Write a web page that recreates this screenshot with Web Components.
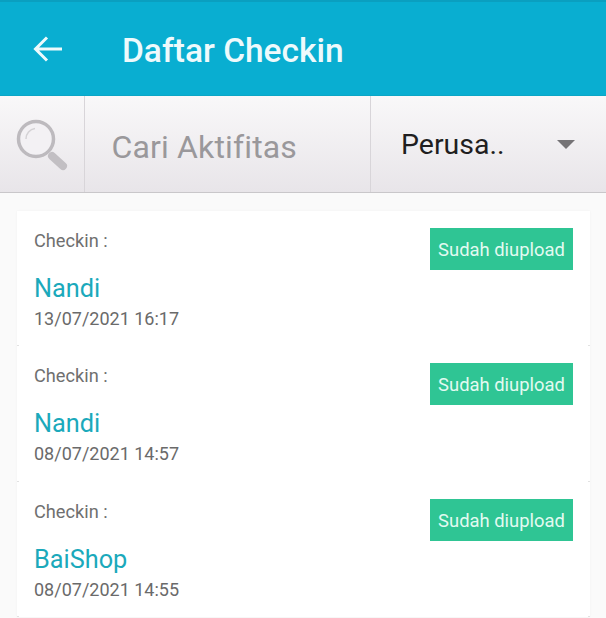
<!DOCTYPE html>
<html>
<head>
<meta charset="utf-8">
<style>
  html, body { margin: 0; padding: 0; }
  body { width: 606px; height: 618px; overflow: hidden; background: #fafafa; font-family: Roboto, "Liberation Sans", sans-serif; }
</style>
</head>
<body>
<app-header title="Daftar Checkin"></app-header>
<search-bar placeholder="Cari Aktifitas" filter="Perusa.."></search-bar>
<checkin-list>
  <checkin-row name="Nandi" date="13/07/2021 16:17"></checkin-row>
  <checkin-row name="Nandi" date="08/07/2021 14:57"></checkin-row>
  <checkin-row name="BaiShop" date="08/07/2021 14:55"></checkin-row>
</checkin-list>
<script>
class AppHeader extends HTMLElement {
  constructor() {
    super();
    this.attachShadow({ mode: "open" }).innerHTML = `<style>
      :host { display: flex; align-items: center; box-sizing: border-box; height: 96px; padding-top: 5px; background: #09aed1; border-top: 2px solid #0a9fc0; border-bottom: 1px solid #0ba6c6; color: #eefafc; }
      svg { display: block; margin: -5px 0 0 33px; width: 30px; height: 30px; flex: none; }
      h1 { margin: 0 0 0 59px; font: 500 33.500px/40px Roboto, sans-serif; }
    </style>
    <svg viewBox="0 0 30 30" fill="none" stroke="currentColor" stroke-width="3"><path d="M29 15H3M14 3.500 2.500 15 14 26.500"/></svg>
    <h1></h1>`;
  }
  connectedCallback() {
    this.shadowRoot.querySelector("h1").textContent = this.getAttribute("title");
  }
}
customElements.define("app-header", AppHeader);

class SearchBar extends HTMLElement {
  constructor() {
    super();
    this.attachShadow({ mode: "open" }).innerHTML = `<style>
      :host { display: flex; box-sizing: border-box; height: 97px; background: linear-gradient(#f9f8f9, #e8e5e9); border-bottom: 1px solid #c9c7ca; }
      .icon { width: 84px; flex: none; display: flex; align-items: center; border-right: 1px solid #d8d5d9; }
      .icon svg { display: block; margin-left: 15px; width: 56px; height: 56px; }
      .input { width: 286px; flex: none; box-sizing: border-box; padding-left: 26.500px; border-right: 1px solid #d8d5d9; font-size: 32px; line-height: 102px; color: #9a989b; letter-spacing: .15px; }
      .filter { flex: 1; display: flex; align-items: center; padding-left: 30px; font-size: 28.500px; color: #1f1e20; }
      .caret { margin-left: auto; margin-right: 31px; width: 0; height: 0; border: 9px solid transparent; border-top: 9px solid #757376; border-bottom: 0; }
    </style>
    <div class="icon"><svg viewBox="0 0 56 56" fill="none">
      <circle cx="21" cy="23" r="17.500" fill="#f3f1f4" stroke="#bdbabe" stroke-width="3.500"/>
      <path d="M11 23a10.500 10.500 0 0 1 9-10.500" stroke="#d4d2d5" stroke-width="1.500"/>
      <path d="M37 40 48 50" stroke="#c2bfc3" stroke-width="8" stroke-linecap="round"/>
    </svg></div>
    <div class="input"></div>
    <div class="filter"><span></span><div class="caret"></div></div>`;
  }
  connectedCallback() {
    this.shadowRoot.querySelector(".input").textContent = this.getAttribute("placeholder");
    this.shadowRoot.querySelector(".filter span").textContent = this.getAttribute("filter");
  }
}
customElements.define("search-bar", SearchBar);

class CheckinList extends HTMLElement {
  constructor() {
    super();
    this.attachShadow({ mode: "open" }).innerHTML = `<style>
      :host { display: block; margin: 17.900px 16px 0 17px; background: #fff; box-shadow: 0 0 2px #f2f2f2; }
    </style><slot></slot>`;
  }
}
customElements.define("checkin-list", CheckinList);

class CheckinRow extends HTMLElement {
  constructor() {
    super();
    this.attachShadow({ mode: "open" }).innerHTML = `<style>
      :host { display: flex; justify-content: space-between; align-items: flex-start; box-sizing: border-box; height: 135.500px; padding: 17px 17px 0; color: #6f6f6f;
        background: linear-gradient(#e2e2e2, #e2e2e2) left bottom / 2px 1px no-repeat, linear-gradient(#e2e2e2, #e2e2e2) right bottom / 2px 1px no-repeat; }
      .label { font-size: 18.200px; line-height: 26px; }
      .name { margin-top: 19px; font-size: 25.300px; line-height: 32px; color: #1ba9bb; }
      .date { font-size: 18px; line-height: 24px; margin-top: 2px; color: #6a6a6a; }
      .badge { width: 143px; height: 42px; background: #2fc594; color: #e3faf1; font-size: 18.400px; line-height: 44px; text-align: center; }
    </style>
    <div>
      <div class="label">Checkin :</div>
      <div class="name"></div>
      <div class="date"></div>
    </div>
    <div class="badge">Sudah diupload</div>`;
  }
  connectedCallback() {
    this.shadowRoot.querySelector(".name").textContent = this.getAttribute("name");
    this.shadowRoot.querySelector(".date").textContent = this.getAttribute("date");
  }
}
customElements.define("checkin-row", CheckinRow);
</script>
</body>
</html>
